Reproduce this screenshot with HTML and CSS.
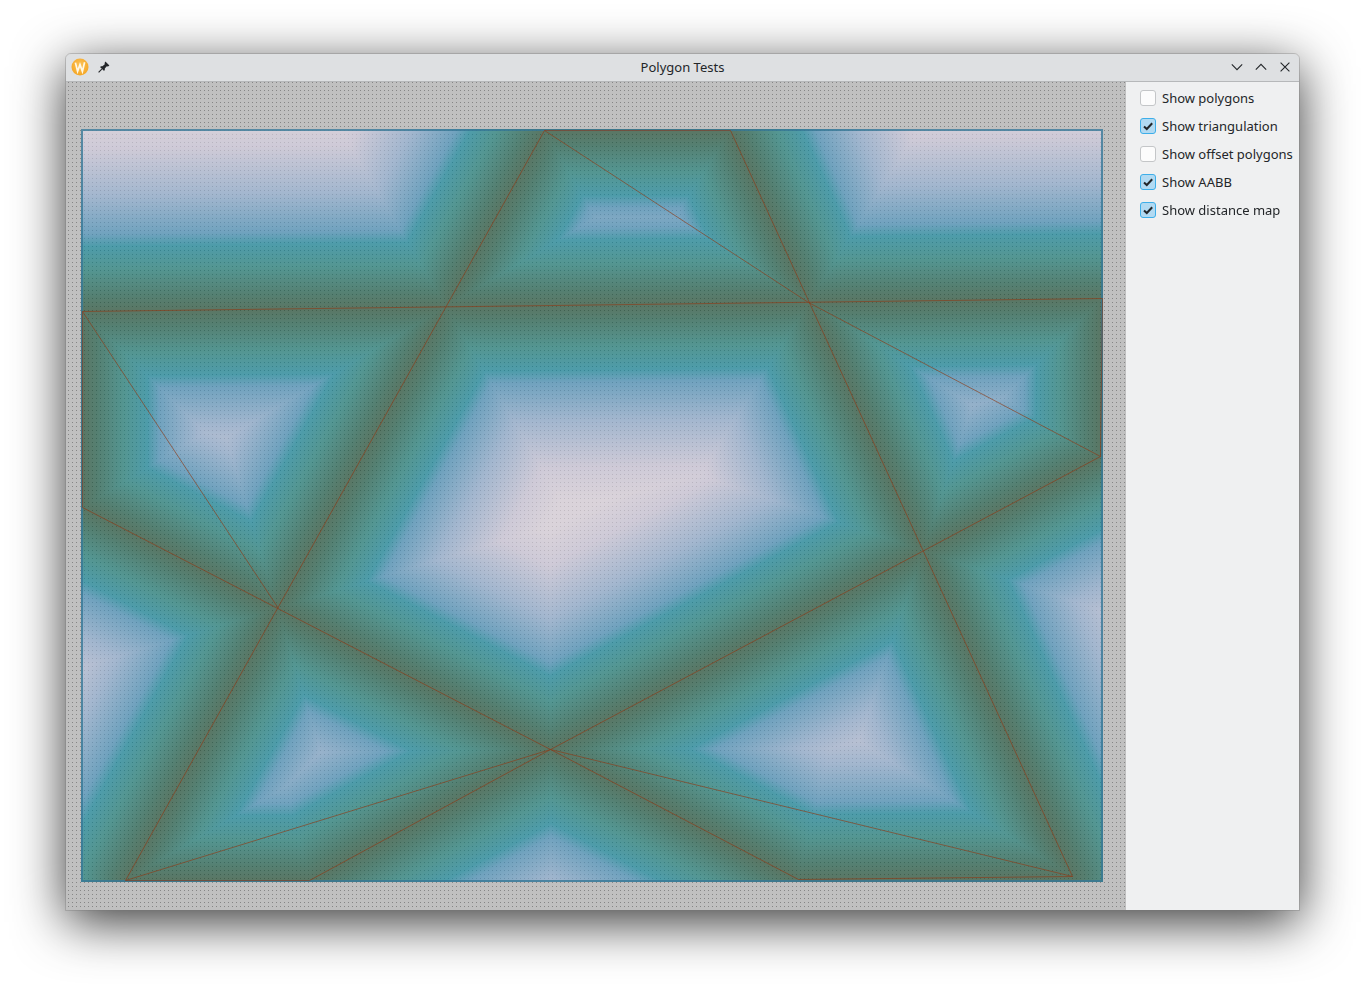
FILE: index.html
```html
<!DOCTYPE html>
<html lang="en">
<head>
<meta charset="utf-8">
<title>Polygon Tests</title>
<link rel="stylesheet" href="styles.css">
</head>
<body>
<div class="window">
  <header class="titlebar">
    <div class="tb-left">
      <svg class="logo" width="18" height="18" viewBox="0 0 18 18"><defs><radialGradient id="lg" cx="50%" cy="40%" r="60%"><stop offset="0" stop-color="#fcc45c"/><stop offset="1" stop-color="#f5a623"/></radialGradient></defs><circle cx="9" cy="9" r="8.5" fill="url(#lg)"/><path d="M4.4 4.6 L6.6 13.4 L9 6.6 L11.4 13.4 L13.6 4.2" fill="none" stroke="#fff8e6" stroke-width="1.7"/></svg>
      <svg class="pin" width="12" height="12" viewBox="0 0 12 12"><path d="M7.4.6 L11.4 4.6 L10 5.4 L8.8 5.2 L6.8 7.6 L6.8 9.2 L5.8 9.8 L2.2 6.2 L2.8 5.2 L4.4 5.2 L6.8 3.2 L6.6 2 Z" fill="#232629"/><path d="M3.8 8.2 L.6 11.4" stroke="#232629" stroke-width="1.1"/></svg>
    </div>
    <div class="title">Polygon Tests</div>
    <div class="tb-right">
      <svg width="12" height="12" viewBox="0 0 12 12"><path d="M.8 3.4 L6 8.6 L11.2 3.4" fill="none" stroke="#232629" stroke-width="1.1"/></svg>
      <svg width="12" height="12" viewBox="0 0 12 12"><path d="M.8 8.6 L6 3.4 L11.2 8.6" fill="none" stroke="#232629" stroke-width="1.1"/></svg>
      <svg width="12" height="12" viewBox="0 0 12 12"><path d="M1.6 1.6 L10.4 10.4 M10.4 1.6 L1.6 10.4" fill="none" stroke="#232629" stroke-width="1.1"/></svg>
    </div>
  </header>
  <div class="content">
    <main class="viewport">
      <canvas id="map" class="map" width="1022" height="753"></canvas>
    </main>
    <aside class="sidebar">
      <label class="option"><span class="box"></span>Show polygons</label>
      <label class="option"><span class="box on"><svg width="12" height="12" viewBox="0 0 12 12"><path d="M2 6.4 L4.8 9 L10.2 3.2" fill="none" stroke="#232629" stroke-width="2"/></svg></span>Show triangulation</label>
      <label class="option"><span class="box"></span>Show offset polygons</label>
      <label class="option"><span class="box on"><svg width="12" height="12" viewBox="0 0 12 12"><path d="M2 6.4 L4.8 9 L10.2 3.2" fill="none" stroke="#232629" stroke-width="2"/></svg></span>Show AABB</label>
      <label class="option"><span class="box on"><svg width="12" height="12" viewBox="0 0 12 12"><path d="M2 6.4 L4.8 9 L10.2 3.2" fill="none" stroke="#232629" stroke-width="2"/></svg></span>Show distance map</label>
    </aside>
  </div>
</div>
<script src="script.js"></script>
</body>
</html>
```

FILE: styles.css
```css
* { box-sizing: border-box; }
html, body { margin: 0; height: 100%; }
body {
  background: #fff;
  padding: 54px 66px 78px 66px;
  overflow: hidden;
  font-family: "Noto Sans", sans-serif;
  color: #232629;
}
.window {
  height: 856px;
  display: flex;
  flex-direction: column;
  border-radius: 5px 5px 0 0;
  box-shadow: 0 12px 52px rgba(0, 0, 0, .8);
  outline: 1px solid rgba(120, 120, 120, .35);
}
.titlebar {
  height: 28px;
  flex: none;
  display: grid;
  grid-template-columns: 1fr auto 1fr;
  align-items: center;
  padding-bottom: 1px;
  background: #dee0e2;
  border-bottom: 1px solid #b6b8ba;
  border-radius: 5px 5px 0 0;
  font-size: 13px;
}
.tb-left { display: flex; align-items: center; gap: 9px; padding-left: 5px; }
.tb-right { display: flex; align-items: center; justify-content: flex-end; gap: 12px; padding-right: 8px; }
.tb-right svg, .tb-left svg { display: block; }
.title { white-space: nowrap; }
.content { flex: 1; display: flex; min-height: 0; }
.viewport {
  flex: 1;
  padding: 47px 22px 0 15px;
  background-color: #c0c0c0;
  background-image:
    repeating-linear-gradient(to bottom, transparent 0 1px, #c0c0c0 1px 4px),
    repeating-linear-gradient(to right, #868686 0 1px, #c0c0c0 1px 4px);
  background-position: 2px 0;
}
.map { display: block; width: 1022px; height: 753px; }
.sidebar {
  flex: none;
  width: 173px;
  padding: 2px 0 0 14px;
  background: #eff0f1;
  font-size: 13px;
}
.option { display: flex; align-items: center; gap: 6px; height: 28px; white-space: nowrap; }
.box {
  width: 16px;
  height: 16px;
  flex: none;
  display: flex;
  align-items: center;
  justify-content: center;
  border: 1px solid #c4c6c8;
  border-radius: 3px;
  background: #fcfcfc;
}
.box.on { border-color: #3daee9; background: #b2daf2; }
```

FILE: script.js
```js
var c = document.getElementById('map'), g = c.getContext('2d');
var W = c.width, H = c.height, OX = 81, OY = 129;
var ALPHA = 0.6, BG = 192;
function P(p) { return [p[0] - OX, p[1] - OY]; }
var polys = [
  [[544,130],[730,130],[1072,876],[798,879],[550,749],[309,880],[125,880]],
  [[82,311],[1102,298],[1100,456],[550,749],[82,507]]
];
var tris = [
  [[544,130],[808,302]], [[808,302],[1100,456]], [[82,311],[278,608]],
  [[550,749],[125,880]], [[550,749],[1072,876]]
];
var segs = [];
polys.forEach(function (q) {
  q.forEach(function (a, i) { segs.push([P(a), P(q[(i + 1) % q.length])]); });
});
var stops = [
  [0, 90, 118, 100], [15, 85, 128, 114], [42, 84, 150, 146], [65, 78, 156, 170],
  [77, 112, 162, 190], [115, 162, 182, 206], [162, 206, 202, 215], [195, 218, 211, 218]
];
function colour(d) {
  for (var i = 1; i < stops.length; i++) {
    if (d <= stops[i][0]) {
      var a = stops[i - 1], b = stops[i], t = (d - a[0]) / (b[0] - a[0]);
      return [a[1] + (b[1] - a[1]) * t, a[2] + (b[2] - a[2]) * t, a[3] + (b[3] - a[3]) * t];
    }
  }
  var l = stops[stops.length - 1];
  return [l[1], l[2], l[3]];
}
var img = g.createImageData(W, H), o = 0, A8 = Math.round(ALPHA * 255);
for (var y = 0; y < H; y++) {
  for (var x = 0; x < W; x++) {
    var best = 1e12;
    for (var s = 0; s < segs.length; s++) {
      var a = segs[s][0], b = segs[s][1];
      var dx = b[0] - a[0], dy = b[1] - a[1];
      var t = ((x - a[0]) * dx + (y - a[1]) * dy) / (dx * dx + dy * dy);
      t = t < 0 ? 0 : t > 1 ? 1 : t;
      var ex = x - a[0] - t * dx, ey = y - a[1] - t * dy, e = ex * ex + ey * ey;
      if (e < best) best = e;
    }
    var col = colour(Math.sqrt(best));
    for (var k = 0; k < 3; k++) img.data[o++] = (col[k] - (1 - ALPHA) * BG) / ALPHA;
    img.data[o++] = A8;
  }
}
g.putImageData(img, 0, 0);
g.strokeStyle = 'rgba(55,120,150,.8)';
g.lineWidth = 2;
g.strokeRect(1, 1, W - 2, H - 2);
g.strokeStyle = 'rgba(140,60,25,.65)';
g.lineWidth = 1;
segs.concat(tris.map(function (t) { return [P(t[0]), P(t[1])]; })).forEach(function (s) {
  g.beginPath();
  g.moveTo(s[0][0] + .5, s[0][1] + .5);
  g.lineTo(s[1][0] + .5, s[1][1] + .5);
  g.stroke();
});
```
